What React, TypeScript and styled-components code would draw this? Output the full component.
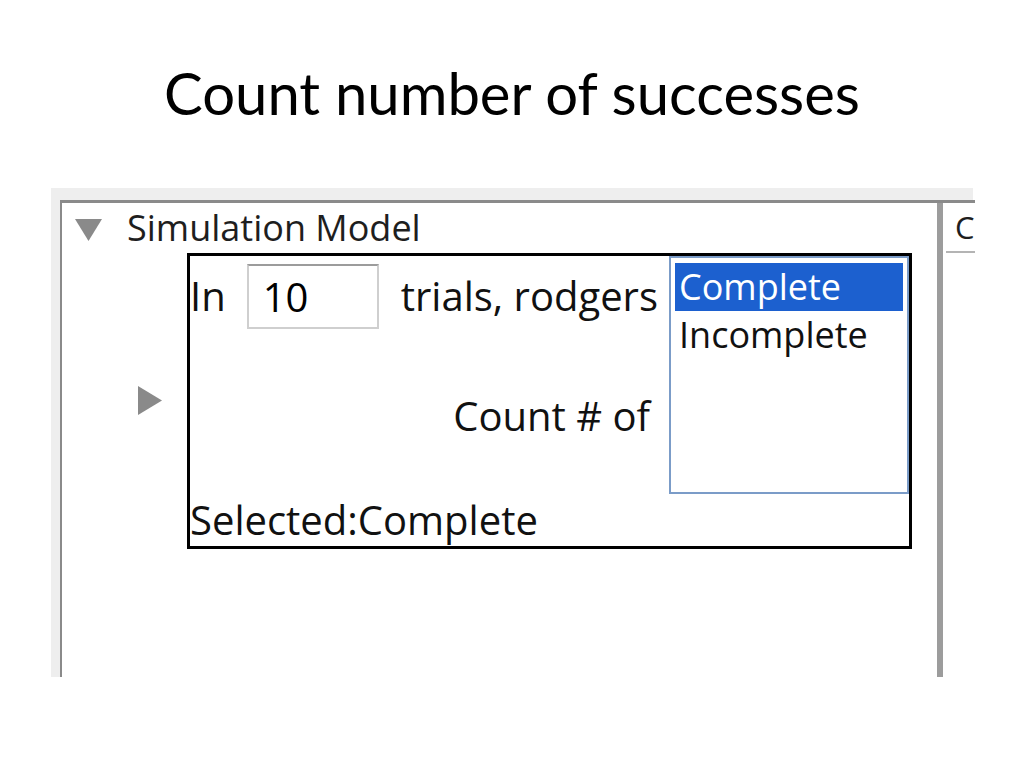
import React from 'react';
import styled, { createGlobalStyle } from 'styled-components';

const GlobalStyle = createGlobalStyle`
  html, body {
    margin: 0;
    padding: 0;
    background: #ffffff;
  }
`;

const options = ['Complete', 'Incomplete'];

const App = (): JSX.Element => {
  const selected = options[0];

  return (
    <>
      <GlobalStyle />
      <Slide>
        <Title>Count number of successes</Title>
        <Shot>
          <Panel>
            <TreePane>
              <NodeRow>
                <svg width='27' height='22' viewBox='0 0 27 22'>
                  <polygon points='0,0 27,0 13.5,22' fill='#8a8a8a' />
                </svg>
                <NodeLabel>Simulation Model</NodeLabel>
              </NodeRow>
              <ChildRow>
                <svg width='24' height='29' viewBox='0 0 24 29'>
                  <polygon points='0,0 24,14.5 0,29' fill='#8a8a8a' />
                </svg>
                <ModelBox>
                  <LeftCol>
                    <TrialRow>
                      <Label>In</Label>
                      <Field>10</Field>
                      <Label $gap={22}>trials, rodgers</Label>
                    </TrialRow>
                    <CountLabel>Count # of</CountLabel>
                  </LeftCol>
                  <ListBox>
                    {options.map((opt) => (
                      <ListItem key={opt} $active={opt === selected}>
                        {opt}
                      </ListItem>
                    ))}
                  </ListBox>
                  <Status>Selected:{selected}</Status>
                </ModelBox>
              </ChildRow>
            </TreePane>
            <Divider />
            <SidePane>
              <ColumnHeader>C</ColumnHeader>
            </SidePane>
          </Panel>
        </Shot>
      </Slide>
    </>
  );
};

const Slide = styled.div`
  width: 1024px;
  height: 768px;
  display: flex;
  flex-direction: column;
  align-items: center;
  background: #ffffff;
`;

const Title = styled.h1`
  margin: 58px 0 0;
  font-family: Lato, 'Open Sans', sans-serif;
  font-size: 58px;
  font-weight: 400;
  line-height: 1.2;
  color: #000000;
`;

const Shot = styled.div`
  margin-top: 60px;
  width: 922px;
  height: 489px;
  box-sizing: border-box;
  padding: 12px 0 0 9px;
  background: #eeeeee;
  display: flex;
`;

const Panel = styled.div`
  flex: 1;
  display: flex;
  background: #ffffff;
  border-top: 3px solid #8a8a8a;
  border-left: 2px solid #8a8a8a;
`;

const TreePane = styled.div`
  width: 875px;
  display: flex;
  flex-direction: column;
`;

const NodeRow = styled.div`
  height: 50px;
  display: flex;
  align-items: center;
  padding-left: 13px;
  svg {
    margin-top: 4px;
  }
`;

const NodeLabel = styled.span`
  margin-left: 25px;
  font-family: 'Open Sans', sans-serif;
  font-size: 36px;
  line-height: 49px;
  color: #1e1e1e;
`;

const ChildRow = styled.div`
  display: flex;
  align-items: center;
  padding-left: 76px;
  svg {
    margin-right: 25px;
  }
`;

const ModelBox = styled.div`
  width: 725px;
  height: 296px;
  box-sizing: border-box;
  border: 3px solid #000000;
  display: grid;
  grid-template-columns: 1fr 240px;
  grid-template-rows: 238px 1fr;
  font-family: 'Open Sans', sans-serif;
  color: #111111;
`;

const LeftCol = styled.div`
  display: flex;
  flex-direction: column;
`;

const TrialRow = styled.div`
  margin-top: 8px;
  height: 65px;
  display: flex;
  align-items: center;
`;

const Label = styled.span<{ $gap?: number }>`
  margin-left: ${(p) => p.$gap ?? 0}px;
  font-size: 40px;
  line-height: 54px;
  white-space: nowrap;
`;

const Field = styled.div`
  margin-left: 21px;
  width: 132px;
  height: 65px;
  box-sizing: border-box;
  padding-left: 14px;
  border: 2px solid #cfcfcf;
  border-top-color: #9c9c9c;
  font-size: 40px;
  line-height: 61px;
  color: #000000;
`;

const CountLabel = styled.span`
  align-self: flex-end;
  margin: 60px 19px 0 0;
  font-size: 40px;
  line-height: 54px;
`;

const ListBox = styled.div`
  box-sizing: border-box;
  border: 2px solid #7b9cc8;
  padding: 5px 4px;
  background: #ffffff;
`;

const ListItem = styled.div<{ $active?: boolean }>`
  height: ${(p) => (p.$active ? 48 : 50)}px;
  padding-left: 4px;
  font-size: 36px;
  line-height: 48px;
  background: ${(p) => (p.$active ? '#1c60cf' : 'transparent')};
  color: ${(p) => (p.$active ? '#ffffff' : '#111111')};
`;

const Status = styled.div`
  grid-column: 1 / span 2;
  font-size: 40px;
  line-height: 52px;
  white-space: nowrap;
`;

const Divider = styled.div`
  width: 6px;
  background: #9c9c9c;
`;

const SidePane = styled.div`
  flex: 1;
  padding-left: 3px;
`;

const ColumnHeader = styled.div`
  height: 48px;
  padding-left: 9px;
  border-bottom: 2px solid #b4b4b4;
  font-family: 'Open Sans', sans-serif;
  font-size: 31px;
  line-height: 48px;
  color: #1e1e1e;
  overflow: hidden;
`;

export default App;
